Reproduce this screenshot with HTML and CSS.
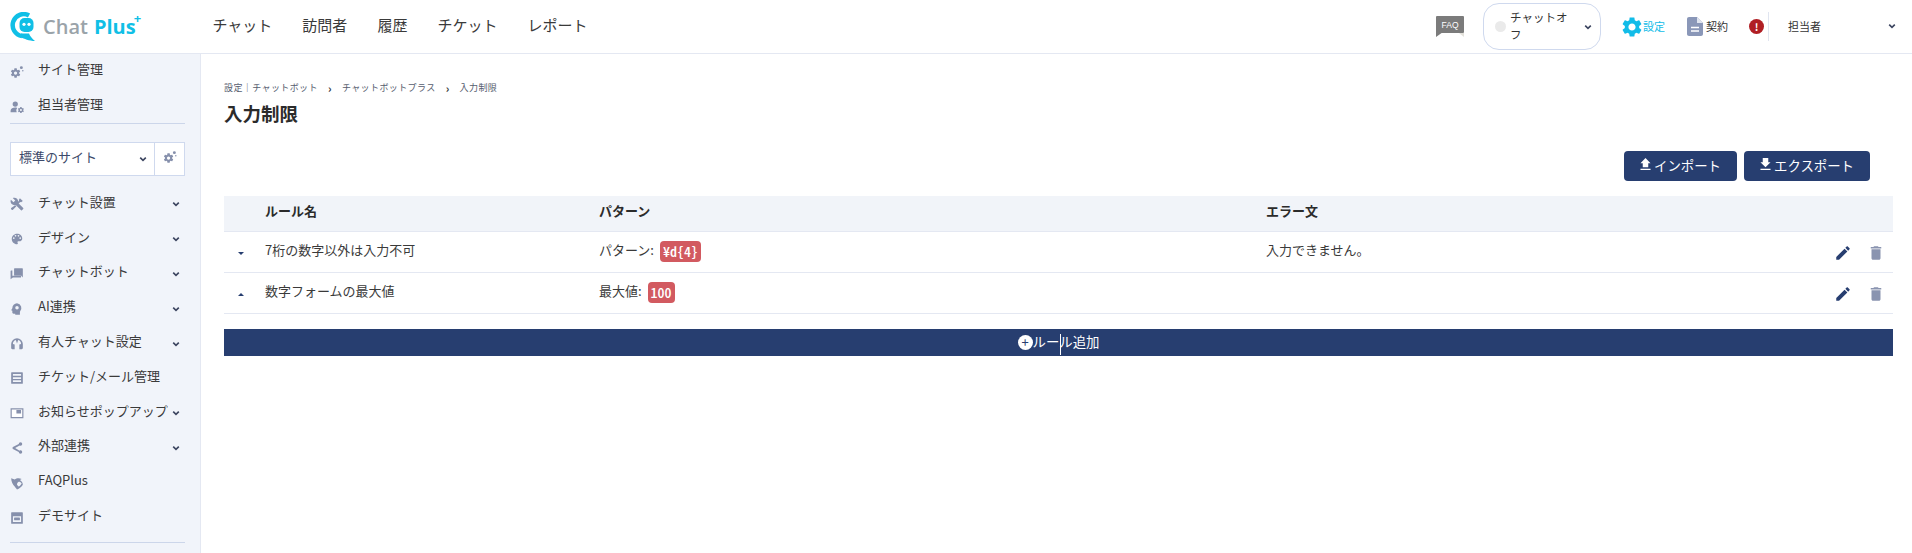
FILE: index.html
```html
<!DOCTYPE html>
<html lang="ja">

<head>
    <meta charset="UTF-8">
    <title>入力制限</title>
    <link rel="stylesheet" href="styles.css">
</head>

<body>
    <svg class="sprite" xmlns="http://www.w3.org/2000/svg">
        <symbol id="i-gear" viewBox="0 0 24 24"><path d="M19.14 12.94c.04-.3.06-.61.06-.94 0-.32-.02-.64-.07-.94l2.03-1.58c.18-.14.23-.41.12-.61l-1.92-3.32c-.12-.22-.37-.29-.59-.22l-2.39.96c-.5-.38-1.03-.7-1.62-.94l-.36-2.54c-.04-.24-.24-.41-.48-.41h-3.84c-.24 0-.43.17-.47.41l-.36 2.54c-.59.24-1.13.57-1.62.94l-2.39-.96c-.22-.08-.47 0-.59.22L2.74 8.87c-.12.21-.08.47.12.61l2.03 1.58c-.05.3-.09.63-.09.94s.02.64.07.94l-2.03 1.58c-.18.14-.23.41-.12.61l1.92 3.32c.12.22.37.29.59.22l2.39-.96c.5.38 1.03.7 1.62.94l.36 2.54c.05.24.24.41.48.41h3.84c.24 0 .44-.17.47-.41l.36-2.54c.59-.24 1.13-.56 1.62-.94l2.39.96c.22.08.47 0 .59-.22l1.92-3.32c.12-.22.07-.47-.12-.61l-2.01-1.58zM12 15.6c-1.98 0-3.6-1.62-3.6-3.6s1.62-3.6 3.6-3.6 3.6 1.62 3.6 3.6-1.62 3.6-3.6 3.6z"/></symbol>
        <symbol id="i-gears" viewBox="0 0 24 24"><path d="M15.6 14.6c.03-.25.05-.5.05-.8 0-.27-.02-.54-.06-.8l1.72-1.34c.15-.12.2-.35.1-.52l-1.63-2.81c-.1-.19-.31-.25-.5-.19l-2.03.82c-.42-.32-.87-.6-1.37-.8l-.3-2.15c-.04-.2-.2-.35-.41-.35H7.92c-.2 0-.37.15-.4.35l-.3 2.15c-.5.2-.96.48-1.38.8l-2.02-.82c-.19-.07-.4 0-.5.19L1.69 11.14c-.1.18-.07.4.1.52l1.72 1.34c-.04.25-.08.53-.08.8s.02.54.06.8l-1.72 1.34c-.15.12-.2.35-.1.52l1.63 2.81c.1.19.31.25.5.19l2.03-.82c.42.32.87.6 1.37.8l.3 2.15c.04.2.2.35.41.35h3.26c.2 0 .37-.15.4-.35l.3-2.15c.5-.2.96-.47 1.38-.8l2.02.82c.19.07.4 0 .5-.19l1.63-2.81c.1-.19.06-.4-.1-.52zM9.5 16.6a2.8 2.8 0 1 1 0-5.6 2.8 2.8 0 0 1 0 5.6z"/><circle cx="19.5" cy="4.5" r="2.5"/><circle cx="22" cy="10" r="1.3"/></symbol>
        <symbol id="i-user-gear" viewBox="0 0 24 24"><circle cx="9" cy="7" r="4.5"/><path d="M1 21v-2.5C1 15 5 13 9 13c1.2 0 2.3.2 3.3.5A6.5 6.5 0 0 0 11.5 21z"/><path d="M22.6 17.8c.03-.2.04-.4.04-.6s-.01-.4-.04-.6l1.2-.95-1.2-2.1-1.45.58c-.3-.23-.63-.42-1-.57L19.9 12h-2.4l-.25 1.56c-.37.15-.7.34-1 .57l-1.45-.58-1.2 2.1 1.2.95c-.03.2-.04.4-.04.6s.01.4.04.6l-1.2.95 1.2 2.1 1.45-.58c.3.23.63.42 1 .57l.25 1.56h2.4l.25-1.56c.37-.15.7-.34 1-.57l1.45.58 1.2-2.1zm-3.9 1.2a1.8 1.8 0 1 1 0-3.6 1.8 1.8 0 0 1 0 3.6z"/></symbol>
        <symbol id="i-tools" viewBox="0 0 24 24"><path d="M22.7 19l-9.1-9.1c.9-2.3.4-5-1.5-6.9-2-2-5-2.4-7.4-1.3L9 6 6 9 1.6 4.7C.4 7.1.9 10.1 2.9 12.1c1.9 1.9 4.6 2.4 6.9 1.5l9.1 9.1c.4.4 1 .4 1.4 0l2.3-2.3c.5-.4.5-1.1.1-1.4z"/><path d="M17 2l5 5-3 2-1.5-.5L14 12l-2-2 3.5-3.5L15 5zM9 14l2 2-6 6c-.8.6-1.5.6-2 0l-1-1c-.5-.6-.5-1.3 0-2z"/></symbol>
        <symbol id="i-palette" viewBox="0 0 24 24"><path d="M12 3c-4.97 0-9 4.03-9 9s4.03 9 9 9c.83 0 1.5-.67 1.5-1.5 0-.39-.15-.74-.39-1.01-.23-.26-.38-.61-.38-.99 0-.83.67-1.5 1.5-1.5H16c2.76 0 5-2.24 5-5 0-4.42-4.03-8-9-8zm-5.5 9c-.83 0-1.5-.67-1.5-1.5S5.67 9 6.5 9 8 9.67 8 10.5 7.33 12 6.5 12zm3-4C8.67 8 8 7.33 8 6.5S8.67 5 9.5 5s1.5.67 1.5 1.5S10.33 8 9.5 8zm5 0c-.83 0-1.5-.67-1.5-1.5S13.67 5 14.5 5s1.5.67 1.5 1.5S15.33 8 14.5 8zm3 4c-.83 0-1.5-.67-1.5-1.5S16.67 9 17.5 9s1.5.67 1.5 1.5-.67 1.5-1.5 1.5z"/></symbol>
        <symbol id="i-forum" viewBox="0 0 24 24"><path d="M3 6h1v9h15v2c0 .55-.45 1-1 1H5l-4 3V7c0-.55.45-1 1-1zM7 3c0-.55.45-1 1-1h13c.55 0 1 .45 1 1v15l-3-3.5H8c-.55 0-1-.45-1-1z"/></symbol>
        <symbol id="i-bulb" viewBox="0 0 24 24"><path d="M12 2a8.5 8.5 0 0 0-8 8.5L2 14l2 1v3c0 1 1 2 2 2h3v2h8v-5.5A8.5 8.5 0 0 0 12 2zm0 11a3 3 0 1 1 0-6 3 3 0 0 1 0 6z" fill-rule="evenodd"/></symbol>
        <symbol id="i-headset" viewBox="0 0 24 24"><path d="M12 2A10 10 0 0 0 2 12v7c0 1.1.9 2 2 2h4v-8l-3-1a7 7 0 0 1 5-6.7L12 11l2-5.7a7 7 0 0 1 5 6.7l-3 1v8h4c1.1 0 2-.9 2-2v-7A10 10 0 0 0 12 2z"/></symbol>
        <symbol id="i-list" viewBox="0 0 24 24"><path d="M3 2h18c.6 0 1 .4 1 1v18c0 .6-.4 1-1 1H3c-.6 0-1-.4-1-1V3c0-.6.4-1 1-1zm2 3v3h14V5zm0 5.5v3h14v-3zM5 16v3h14v-3z" fill-rule="evenodd"/></symbol>
        <symbol id="i-window" viewBox="0 0 24 24"><rect x="2" y="5" width="20" height="15" fill="#fff"/><path d="M1 4h22v17H1zm2 2v13h18V6zm8 1h8v6h-8z" fill-rule="evenodd"/></symbol>
        <symbol id="i-share" viewBox="0 0 24 24"><path d="M18 2a3 3 0 0 1 0 6c-.6 0-1.1-.2-1.6-.5L8.8 12l7.6 4.5c.5-.3 1-.5 1.6-.5a3 3 0 1 1-3 3L5 13.8a2.5 2.5 0 0 1 0-3.6L15 5a3 3 0 0 1 3-3z"/></symbol>
        <symbol id="i-shield" viewBox="0 0 24 24"><path d="M2 4l6 2c3-2 7-3 12-1l-3 2c3 2 5 5 5 8-2 3-6 7-10 8-1-2-3-3-4-5-3-3-6-8-6-14zm13 6c-2 1-3 3-3 5 1 1 2 3 3 3 2-1 4-3 5-5-1-2-3-3-5-3z" fill-rule="evenodd"/></symbol>
        <symbol id="i-site" viewBox="0 0 24 24"><path d="M3 2h18c.6 0 1 .4 1 1v18c0 .6-.4 1-1 1H3c-.6 0-1-.4-1-1V3c0-.6.4-1 1-1zm2 7v10h14V9zm3 2h8c.6 0 1 .4 1 1v3c0 .6-.4 1-1 1H8c-.6 0-1-.4-1-1v-3c0-.6.4-1 1-1z" fill-rule="evenodd"/></symbol>
        <symbol id="i-chevron" viewBox="0 0 10 10"><path d="M1.5 3.2L5 6.7l3.5-3.500" fill="none" stroke="currentColor" stroke-width="2"/></symbol>
        <symbol id="i-pencil" viewBox="0 0 24 24"><path d="M3 17.25V21h3.75L17.81 9.94l-3.75-3.75L3 17.25zM20.71 7.04c.39-.39.39-1.02 0-1.41l-2.34-2.34c-.39-.39-1.02-.39-1.41 0l-1.83 1.83 3.75 3.75 1.83-1.83z"/></symbol>
        <symbol id="i-trash" viewBox="0 0 24 24"><path d="M6 19c0 1.1.9 2 2 2h8c1.1 0 2-.9 2-2V7H6v12zM19 4h-3.5l-1-1h-5l-1 1H5v2h14V4z"/></symbol>
        <symbol id="i-upload" viewBox="0 0 12 14"><path d="M6 0l5.5 5.5H9V10H3V5.5H.5zM.5 11.5h11V13H.5z"/></symbol>
        <symbol id="i-download" viewBox="0 0 12 14"><path d="M3 0h6v4.500h2.500L6 10 .5 4.500H3zM.5 11.500h11V13H.5z"/></symbol>
    </svg>

    <header class="topbar">
        <div class="logo">
            <svg class="logo-mark" viewBox="0 0 26 29">
                <path d="M20 3.5A11 11 0 1 0 13 24" fill="none" stroke="#10bfe6" stroke-width="4.5"/>
                <path d="M12 21.5h8c1 2.5 3 5 6 7.5-6 0-11-2.5-14-3.5z" fill="#10bfe6"/>
                <rect x="10.5" y="6" width="14" height="14" rx="5" fill="#10bfe6"/>
                <circle cx="15" cy="12.3" r="1.6" fill="#fff"/>
                <circle cx="20" cy="12.3" r="1.6" fill="#fff"/>
            </svg>
            <span class="logo-chat">Chat</span>
            <span class="logo-plus">Plus<sup>+</sup></span>
        </div>
        <nav class="main-nav">
            <a>チャット</a>
            <a>訪問者</a>
            <a>履歴</a>
            <a>チケット</a>
            <a>レポート</a>
        </nav>
        <div class="top-right">
            <svg class="faq" viewBox="0 0 28 21">
                <rect width="28" height="17" rx="1" fill="#7b7b7b"/>
                <path d="M0 16h7l-7 5z" fill="#7b7b7b"/>
                <path d="M23 17h5v4z" fill="#e3e1da"/>
                <text x="14" y="11.5" text-anchor="middle">FAQ</text>
            </svg>
            <div class="chat-state">
                <span class="dot"></span>
                <span class="chat-state-text">チャットオフ</span>
                <svg class="chev"><use href="#i-chevron"/></svg>
            </div>
            <a class="top-link settings"><svg class="gear"><use href="#i-gear"/></svg><span>設定</span></a>
            <a class="top-link contract">
                <svg class="doc" viewBox="0 0 16 19">
                    <path d="M2 0h8l6 6v11c0 1.1-.9 2-2 2H2c-1.1 0-2-.9-2-2V2C0 .9.9 0 2 0z" fill="#8a97b8"/>
                    <path d="M10 0l6 6h-6z" fill="#dfe4ef"/>
                    <path d="M4 10.5h8M4 14h8" stroke="#fff" stroke-width="1.5"/>
                </svg><span>契約</span>
            </a>
            <span class="alert">!</span>
            <div class="user">
                <span>担当者</span>
                <svg class="chev"><use href="#i-chevron"/></svg>
            </div>
        </div>
    </header>

    <div class="layout">
        <aside class="sidebar">
            <ul class="side-top">
                <li><svg class="side-icon"><use href="#i-gears"/></svg>サイト管理</li>
                <li><svg class="side-icon"><use href="#i-user-gear"/></svg>担当者管理</li>
            </ul>
            <div class="site-select">
                <div class="site-name">標準のサイト<svg class="chev"><use href="#i-chevron"/></svg></div>
                <div class="site-gear"><svg class="side-icon"><use href="#i-gears"/></svg></div>
            </div>
            <ul class="side-menu">
                <li><svg class="side-icon"><use href="#i-tools"/></svg>チャット設置<svg class="chev"><use href="#i-chevron"/></svg></li>
                <li><svg class="side-icon"><use href="#i-palette"/></svg>デザイン<svg class="chev"><use href="#i-chevron"/></svg></li>
                <li><svg class="side-icon"><use href="#i-forum"/></svg>チャットボット<svg class="chev"><use href="#i-chevron"/></svg></li>
                <li><svg class="side-icon"><use href="#i-bulb"/></svg>AI連携<svg class="chev"><use href="#i-chevron"/></svg></li>
                <li><svg class="side-icon"><use href="#i-headset"/></svg>有人チャット設定<svg class="chev"><use href="#i-chevron"/></svg></li>
                <li><svg class="side-icon"><use href="#i-list"/></svg>チケット/メール管理</li>
                <li><svg class="side-icon"><use href="#i-window"/></svg>お知らせポップアップ<svg class="chev"><use href="#i-chevron"/></svg></li>
                <li><svg class="side-icon"><use href="#i-share"/></svg>外部連携<svg class="chev"><use href="#i-chevron"/></svg></li>
                <li><svg class="side-icon"><use href="#i-shield"/></svg>FAQPlus</li>
                <li><svg class="side-icon"><use href="#i-site"/></svg>デモサイト</li>
            </ul>
            <div class="side-line"></div>
        </aside>

        <main class="content">
            <div class="crumbs">
                <span>設定｜チャットボット</span>
                <span class="sep">›</span>
                <span>チャットボットプラス</span>
                <span class="sep">›</span>
                <span>入力制限</span>
            </div>
            <h1>入力制限</h1>
            <div class="actions">
                <button class="btn btn-import" type="button"><svg><use href="#i-upload"/></svg>インポート</button>
                <button class="btn btn-export" type="button"><svg><use href="#i-download"/></svg>エクスポート</button>
            </div>
            <table class="rules">
                <colgroup>
                    <col class="col-toggle">
                    <col class="col-name">
                    <col class="col-pattern">
                    <col>
                    <col class="col-actions">
                </colgroup>
                <thead>
                    <tr>
                        <th></th>
                        <th>ルール名</th>
                        <th>パターン</th>
                        <th>エラー文</th>
                        <th></th>
                    </tr>
                </thead>
                <tbody>
                    <tr>
                        <td class="toggle"><span class="caret-down"></span></td>
                        <td>7桁の数字以外は入力不可</td>
                        <td>パターン: <span class="tag">¥d{4}</span></td>
                        <td>入力できません。</td>
                        <td class="row-actions"><svg class="edit"><use href="#i-pencil"/></svg><svg class="del"><use href="#i-trash"/></svg></td>
                    </tr>
                    <tr>
                        <td class="toggle"><span class="caret-up"></span></td>
                        <td>数字フォームの最大値</td>
                        <td>最大値: <span class="tag">100</span></td>
                        <td></td>
                        <td class="row-actions"><svg class="edit"><use href="#i-pencil"/></svg><svg class="del"><use href="#i-trash"/></svg></td>
                    </tr>
                </tbody>
            </table>
            <div class="add-rule">
                <span class="plus">+</span>
                <span class="add-label">ルール追加<i class="cursor"></i></span>
            </div>
        </main>
    </div>
</body>

</html>
```

FILE: styles.css
```css
* {
    padding: 0;
    margin: 0;
    box-sizing: border-box;
}

body {
    height: 553px;
    overflow: hidden;
    font-family: "Noto Sans CJK JP", "Noto Sans", sans-serif;
    color: #333;
    background-color: white;
}

ul {
    list-style: none;
}

.sprite {
    display: none;
}

svg {
    fill: currentColor;
}

.chev {
    width: 8px;
    height: 8px;
    color: #3c4560;
    flex-shrink: 0;
}

/* top bar */
.topbar {
    height: 54px;
    display: flex;
    align-items: center;
    border-bottom: 1px solid #e4e8f2;
}

.logo {
    width: 212.5px;
    display: flex;
    align-items: center;
    padding-left: 9px;
    font-family: "Open Sans", sans-serif;
    font-size: 20px;
    line-height: 28px;
}

.logo-mark {
    width: 26px;
    height: 29px;
    margin-right: 8px;
}

.logo-chat {
    color: #9aa3a9;
    font-weight: 600;
    margin-right: 6px;
}

.logo-plus {
    color: #10bfe6;
    font-weight: 700;
    position: relative;
}

.logo-plus sup {
    position: absolute;
    top: -5px;
    left: calc(100% - 2px);
    font-size: 13px;
    line-height: 20px;
}

.main-nav {
    display: flex;
    gap: 30px;
    padding-bottom: 4px;
    font-size: 15px;
    color: #3a3a3a;
}

.top-right {
    margin-left: auto;
    display: flex;
    align-items: center;
    height: 100%;
}

.faq {
    width: 28px;
    height: 21px;
    margin-right: 19px;
}

.faq text {
    font-family: "Liberation Sans", sans-serif;
    font-size: 8.5px;
    fill: white;
}

.chat-state {
    width: 118px;
    height: 47px;
    display: flex;
    align-items: center;
    border: 1px solid #cfd9ee;
    border-radius: 16px;
    padding: 0 8px 0 11px;
    font-size: 11.5px;
    line-height: 17px;
    margin-right: 19px;
}

.dot {
    width: 11px;
    height: 11px;
    border-radius: 50%;
    background-color: #eaeaea;
    flex-shrink: 0;
    margin-right: 4px;
}

.chat-state-text {
    width: 60px;
    margin-right: 14px;
    padding-bottom: 2px;
}

.top-link {
    display: flex;
    align-items: center;
    font-size: 11px;
}

.top-link span {
    padding-bottom: 1px;
}

.settings {
    color: #12bce8;
    margin-right: 22px;
}

.gear {
    width: 24px;
    height: 24px;
    margin-right: -1px;
}

.contract {
    margin-right: 21px;
}

.doc {
    width: 16px;
    height: 19px;
    margin-right: 3px;
}

.alert {
    width: 15px;
    height: 15px;
    border-radius: 50%;
    background-color: #b01f24;
    color: white;
    font-size: 10px;
    font-weight: 700;
    line-height: 15px;
    text-align: center;
    margin-right: 4px;
}

.user {
    width: 144px;
    height: 29px;
    display: flex;
    align-items: center;
    justify-content: space-between;
    border-left: 1px solid #e0e5f0;
    padding: 0 16px 2px 19px;
    font-size: 11px;
}

/* sidebar */
.layout {
    display: flex;
    height: 499px;
}

.sidebar {
    width: 201px;
    flex-shrink: 0;
    padding: 0 15px 0 10px;
    background-color: #f1f4fa;
    border-right: 1px solid #e4e8f2;
    font-size: 13px;
    color: #3a3a3a;
}

/* the text box sits low in this font, so the text is pushed up and the icons back down */
.sidebar li {
    display: flex;
    align-items: center;
    height: 34.8px;
    padding-bottom: 4px;
}

.side-icon {
    width: 14px;
    height: 14px;
    color: #8690ac;
    flex-shrink: 0;
}

.sidebar li .side-icon {
    margin-top: 6px;
    margin-right: 14px;
}

.sidebar li .chev {
    margin-top: 6px;
    margin-left: auto;
    margin-right: 5px;
}

.side-top {
    display: flex;
    flex-direction: column;
    gap: 2px;
    padding-bottom: 1px;
    border-bottom: 1px solid #ccd6ea;
}

.sidebar .side-top li {
    height: 33px;
}

.site-select {
    margin-top: 18px;
    height: 34px;
    display: flex;
    background-color: white;
    border: 1px solid #cfd9ee;
    font-size: 13px;
    color: #3c4a6a;
}

.site-name {
    flex: 1;
    display: flex;
    align-items: center;
    justify-content: space-between;
    padding: 0 7px 6px 8px;
    border-right: 1px solid #cfd9ee;
}

.site-name .chev {
    margin-top: 6px;
}

.site-gear {
    width: 29px;
    padding-bottom: 4px;
    display: flex;
    align-items: center;
    justify-content: center;
}

.side-menu {
    margin-top: 10px;
}

.side-line {
    margin-top: 8px;
    border-top: 1px solid #ccd6ea;
}

/* content */
.content {
    flex: 1;
    padding: 0 19px 0 23px;
}

.crumbs {
    margin-top: 27px;
    display: flex;
    gap: 10px;
    font-size: 9px;
    line-height: 14px;
    letter-spacing: 0.4px;
    color: #555c6e;
}

.crumbs .sep {
    font-size: 11px;
    font-weight: 700;
    color: #333;
}

h1 {
    margin-top: 4px;
    font-size: 18.5px;
    line-height: 28px;
    color: #2b2b2b;
}

.actions {
    margin-top: 24px;
    padding-right: 23px;
    display: flex;
    justify-content: flex-end;
    gap: 7px;
}

.btn {
    height: 30px;
    padding-bottom: 3px;
    display: flex;
    align-items: center;
    justify-content: center;
    gap: 3px;
    color: white;
    background-color: #273e70;
    border: none;
    border-radius: 4px;
    font-family: inherit;
    font-size: 13.4px;
}

.btn svg {
    width: 11px;
    height: 13px;
}

.btn-import {
    width: 113px;
}

.btn-export {
    width: 126px;
}

.rules {
    margin-top: 15px;
    width: 100%;
    table-layout: fixed;
    border-collapse: collapse;
    font-size: 13px;
}

.col-toggle {
    width: 41px;
}

.col-name {
    width: 334px;
}

.col-pattern {
    width: 667px;
}

.col-actions {
    width: 100px;
}

.rules th {
    height: 35px;
    padding-bottom: 5px;
    text-align: left;
    background-color: #f1f4f9;
    border-bottom: 1px solid #e4e8f2;
    color: #2b2b2b;
}

.rules td {
    height: 41px;
    padding-bottom: 4px;
    border-bottom: 1px solid #e4e8f2;
    color: #3a3a3a;
}

.rules .toggle {
    text-align: left;
    padding: 0 0 0 14px;
}

.caret-down,
.caret-up {
    display: inline-block;
    border-left: 3px solid transparent;
    border-right: 3px solid transparent;
    vertical-align: middle;
}

.caret-down {
    border-top: 3px solid #273e70;
}

.caret-up {
    border-bottom: 3px solid #273e70;
}

/* halfwidth glyphs, the tag holds a pattern */
.tag {
    display: inline-block;
    margin: -3px 0 -3px 3px;
    padding: 0 3px;
    height: 21px;
    line-height: 20px;
    border-radius: 4px;
    vertical-align: -2px;
    background-color: #d25a60;
    color: white;
    font-weight: 500;
    font-size: 14px;
    font-feature-settings: "hwid";
}

.rules .row-actions {
    text-align: right;
    padding: 0 8px 0 0;
}

.row-actions svg {
    width: 18px;
    height: 18px;
    vertical-align: middle;
}

.edit {
    color: #273e70;
    margin-right: 15px;
}

.del {
    color: #8a94b0;
}

.add-rule {
    margin-top: 15px;
    height: 27px;
    display: flex;
    align-items: center;
    justify-content: center;
    background-color: #273e70;
    color: white;
    font-size: 13.4px;
}

.plus {
    width: 15px;
    height: 15px;
    border-radius: 50%;
    background-color: white;
    color: #273e70;
    font-size: 13px;
    line-height: 14px;
    text-align: center;
}

.add-label {
    position: relative;
    top: -1px;
}

.cursor {
    position: absolute;
    left: 27px;
    top: 3px;
    width: 1px;
    height: 21px;
    background-color: white;
}
```
